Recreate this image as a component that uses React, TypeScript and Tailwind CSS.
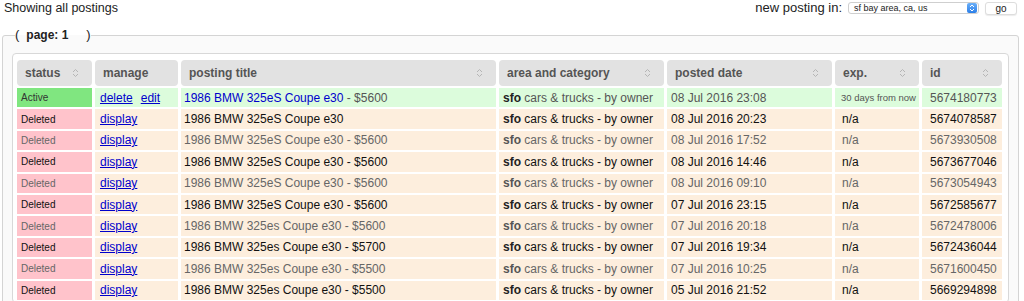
import React from 'react';

type Row = {
  active: boolean;
  title: string;
  price: string;
  date: string;
  id: string;
};

const ROWS: Row[] = [
  { active: true, title: '1986 BMW 325eS Coupe e30', price: ' - $5600', date: '08 Jul 2016 23:08', id: '5674180773' },
  { active: false, title: '1986 BMW 325eS Coupe e30', price: '', date: '08 Jul 2016 20:23', id: '5674078587' },
  { active: false, title: '1986 BMW 325eS Coupe e30', price: ' - $5600', date: '08 Jul 2016 17:52', id: '5673930508' },
  { active: false, title: '1986 BMW 325eS Coupe e30', price: ' - $5600', date: '08 Jul 2016 14:46', id: '5673677046' },
  { active: false, title: '1986 BMW 325eS Coupe e30', price: ' - $5600', date: '08 Jul 2016 09:10', id: '5673054943' },
  { active: false, title: '1986 BMW 325eS Coupe e30', price: ' - $5600', date: '07 Jul 2016 23:15', id: '5672585677' },
  { active: false, title: '1986 BMW 325es Coupe e30', price: ' - $5600', date: '07 Jul 2016 20:18', id: '5672478006' },
  { active: false, title: '1986 BMW 325es Coupe e30', price: ' - $5700', date: '07 Jul 2016 19:34', id: '5672436044' },
  { active: false, title: '1986 BMW 325es Coupe e30', price: ' - $5500', date: '07 Jul 2016 10:25', id: '5671600450' },
  { active: false, title: '1986 BMW 325es Coupe e30', price: ' - $5500', date: '05 Jul 2016 21:52', id: '5669294898' },
];

const HEADERS = [
  { label: 'status', w: 'w-[75px]' },
  { label: 'manage', w: 'w-[83px]', noSort: true },
  { label: 'posting title', w: 'w-[315px]' },
  { label: 'area and category', w: 'w-[165px]' },
  { label: 'posted date', w: 'w-[165px]' },
  { label: 'exp.', w: 'w-[84px]' },
  { label: 'id', w: 'w-[80px]' },
];

function SortIcon() {
  return (
    <svg width="7" height="10" viewBox="0 0 7 10" className="shrink-0">
      <path d="M1 4 L3.5 1.5 L6 4" fill="none" stroke="#b5b5b5" strokeWidth="1" />
      <path d="M1 6 L3.5 8.5 L6 6" fill="none" stroke="#b5b5b5" strokeWidth="1" />
    </svg>
  );
}

export default function App() {
  return (
    <div className="w-[1024px] h-[301px] overflow-hidden bg-white text-[#222] font-['Liberation_Sans',Arial,sans-serif]">
      {/* top bar */}
      <div className="flex items-start justify-between h-[17px] pl-[4px] pr-[7px]">
        <span className="text-[12.5px] leading-[15px] pt-[1px]">Showing all postings</span>
        <div className="flex items-center gap-[5px] pt-[1px]">
          <span className="text-[13px] leading-[14px] text-[#222] mr-[1px]">new posting in:</span>
          <div className="flex items-center w-[131px] h-[12px] bg-white border border-[#cfcfcf] rounded-[3px] pl-[5px] pr-[1px]">
            <span className="text-[9px] leading-[10px] flex-1">sf bay area, ca, us</span>
            <span className="w-[10px] h-[10px] rounded-[2px] bg-gradient-to-b from-[#6cb0f8] to-[#2a7fe8] flex items-center justify-center">
              <svg width="6" height="8" viewBox="0 0 6 8">
                <path d="M1 3 L3 1 L5 3 M1 5 L3 7 L5 5" fill="none" stroke="white" strokeWidth="1" />
              </svg>
            </span>
          </div>
          <button className="w-[32px] h-[13px] bg-white border border-[#ddd] rounded-[3px] text-[10px] leading-[11px] ml-[1px] shadow-[0_1px_1px_rgba(0,0,0,0.08)]">go</button>
        </div>
      </div>

      <fieldset className="mt-[10px] ml-[2px] mr-[5px] border border-[#d4d4d4] rounded-[3px] bg-[#fafafa] px-[9px] pb-[8px] pt-[10px]">
        <legend className="ml-[3px] px-0 text-[13px] leading-[15px] text-[#222]">
          <span>(</span>
          <b className="ml-[7px] text-[12px]">page: 1</b>
          <span className="ml-[18px]">)</span>
        </legend>

        <div className="bg-white border border-[#d8d8d8] rounded-[4px] pt-[4px] px-[1px]">
          <table className="w-[991px] table-fixed border-separate border-spacing-x-[3px] border-spacing-y-[2px] text-[12px] leading-[14px]">
            <thead>
              <tr>
                {HEADERS.map((h) => (
                  <th key={h.label} className={`${h.w} h-[26px] bg-[#e2e2e2] rounded-[4px] px-[8px] text-left font-bold text-[#555]`}>
                    <div className="flex items-center justify-between pr-[5px]">
                      <span>{h.label}</span>
                      {!h.noSort && <SortIcon />}
                    </div>
                  </th>
                ))}
              </tr>
            </thead>
            <tbody>
              {ROWS.map((r, i) => {
                const rowBg = r.active ? 'bg-[#dcfcdc]' : 'bg-[#fdeedd]';
                const txt = r.active ? 'text-[#555]' : i % 2 === 1 ? 'text-[#111]' : 'text-[#666]';
                return (
                  <tr key={r.id} className={`h-[19.4px] ${txt}`}>
                    <td className={`px-[4px] py-0 pt-[1px] text-[10px] leading-[12px] ${r.active ? 'bg-[#80e680] text-[#333]' : 'bg-[#ffc3cb]'}`}>
                      {r.active ? 'Active' : 'Deleted'}
                    </td>
                    <td className={`${rowBg} px-[5px] py-0`}>
                      {r.active ? (
                        <>
                          <a className="text-[#0000cc] underline" href="#">delete</a>
                          <a className="text-[#0000cc] underline ml-[8px]" href="#">edit</a>
                        </>
                      ) : (
                        <a className="text-[#0000cc] underline" href="#">display</a>
                      )}
                    </td>
                    <td className={`${rowBg} px-[3px] py-0 whitespace-nowrap`}>
                      {r.active ? <a className="text-[#0000cc]" href="#">{r.title}</a> : r.title}
                      {r.price}
                    </td>
                    <td className={`${rowBg} px-[4px] py-0 whitespace-nowrap`}>
                      <b className={r.active || i % 2 === 1 ? 'text-[#222]' : 'text-[#555]'}>sfo</b> cars &amp; trucks - by owner
                    </td>
                    <td className={`${rowBg} px-[4px] py-0 whitespace-nowrap`}>{r.date}</td>
                    <td className={`${rowBg} px-[7px] py-0 whitespace-nowrap overflow-hidden ${r.active ? 'text-[9.5px] pl-[6px]' : ''}`}>
                      {r.active ? '30 days from now' : 'n/a'}
                    </td>
                    <td className={`${rowBg} px-[8px] py-0 whitespace-nowrap`}>{r.id}</td>
                  </tr>
                );
              })}
            </tbody>
          </table>
        </div>
      </fieldset>
    </div>
  );
}
